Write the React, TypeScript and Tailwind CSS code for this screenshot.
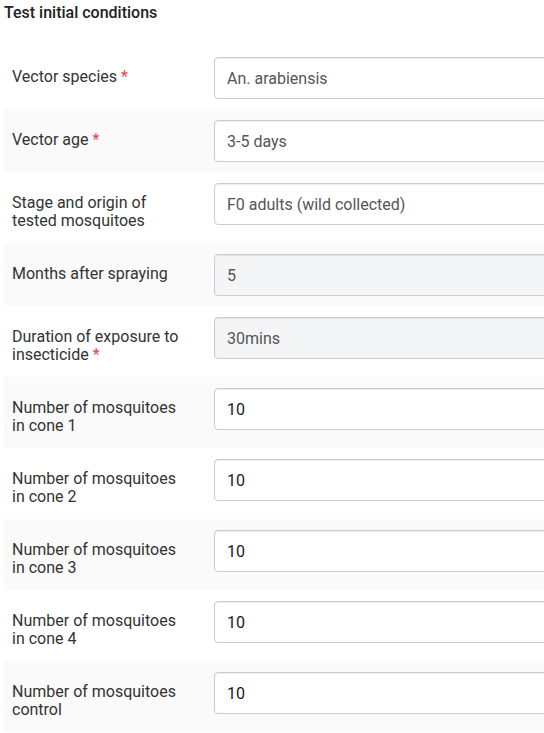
import React from 'react';

type Field = {
  label: string;
  value: string;
  required?: boolean;
  muted?: boolean;
  readOnly?: boolean;
};

const FIELDS: Field[] = [
  { label: 'Vector species', value: 'An. arabiensis', required: true, muted: true },
  { label: 'Vector age', value: '3-5 days', required: true, muted: true },
  { label: 'Stage and origin of tested mosquitoes', value: 'F0 adults (wild collected)', muted: true },
  { label: 'Months after spraying', value: '5', muted: true, readOnly: true },
  { label: 'Duration of exposure to insecticide', value: '30mins', required: true, muted: true, readOnly: true },
  { label: 'Number of mosquitoes in cone 1', value: '10' },
  { label: 'Number of mosquitoes in cone 2', value: '10' },
  { label: 'Number of mosquitoes in cone 3', value: '10' },
  { label: 'Number of mosquitoes in cone 4', value: '10' },
  { label: 'Number of mosquitoes control', value: '10' },
];

const App: React.FC = () => {
  return (
    <div className="w-[544px] h-[733px] overflow-hidden bg-white font-['Roboto',sans-serif]">
      <div className="w-[680px] px-1">
        {/* Heading */}
        <h3 className="h-[46px] pt-[3px] text-[16px] leading-[20px] font-medium text-[#222]">
          Test initial conditions
        </h3>

        {/* Rows */}
        {FIELDS.map((f, i) => (
          <div
            key={f.label}
            className={`flex items-start pl-2 pt-[11px] pb-[10px] ${i % 2 === 1 ? 'bg-[#fafafa]' : 'bg-white'}`}
          >
            <label className="w-[202px] shrink-0 pr-[26px] pt-[11px] pb-[3px] text-[16px] leading-[18px] text-[#333]">
              {f.label}
              {f.required && <span className="text-[#e8434b]"> *</span>}
            </label>
            <input
              type="text"
              readOnly
              value={f.value}
              className={`h-[42px] flex-1 rounded-[4px] border border-[#cccccc] px-3 text-[16px] shadow-[inset_0_1px_1px_rgba(0,0,0,0.075)] outline-none ${f.readOnly ? 'bg-[#f4f5f7]' : 'bg-white'} ${f.muted ? 'text-[#555]' : 'text-[#1a1a1a]'}`}
            />
          </div>
        ))}
      </div>
    </div>
  );
};

export default App;
